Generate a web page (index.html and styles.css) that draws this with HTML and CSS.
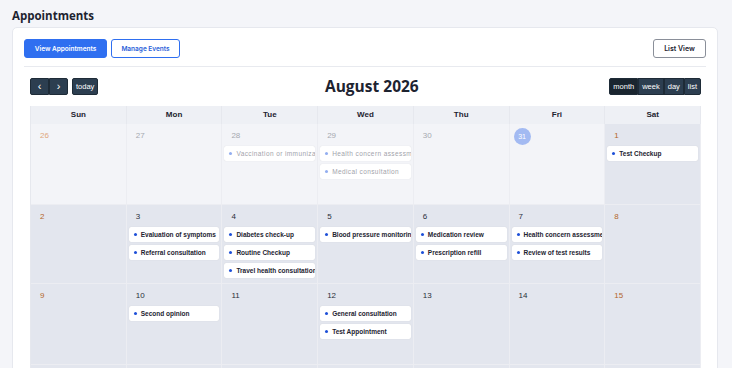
FILE: index.html
```html
<!DOCTYPE html>
<html lang="en">
<head>
    <meta charset="UTF-8">
    <meta name="viewport" content="width=device-width, initial-scale=1.0">
    <title>Appointments</title>
    <link rel="stylesheet" href="styles.css">
</head>
<body>
    <h1 class="page-title">Appointments</h1>
    <section class="card">
        <div class="tab-bar">
            <div class="tabs">
                <button class="tab-button active">View Appointments</button>
                <button class="tab-button">Manage Events</button>
            </div>
            <button class="list-button">List View</button>
        </div>

        <div class="calendar">
            <div class="cal-toolbar">
                <div class="cal-left">
                    <div class="btn-group">
                        <button class="cal-btn arrow">&#8249;</button>
                        <button class="cal-btn arrow">&#8250;</button>
                    </div>
                    <button class="cal-btn">today</button>
                </div>
                <h2 class="cal-title">August 2026</h2>
                <div class="btn-group views">
                    <button class="cal-btn active">month</button>
                    <button class="cal-btn">week</button>
                    <button class="cal-btn">day</button>
                    <button class="cal-btn">list</button>
                </div>
            </div>

            <div class="cal-grid">
                <div class="dow">Sun</div>
                <div class="dow">Mon</div>
                <div class="dow">Tue</div>
                <div class="dow">Wed</div>
                <div class="dow">Thu</div>
                <div class="dow">Fri</div>
                <div class="dow">Sat</div>

                <!-- week 1 -->
                <div class="day other weekend"><span class="num">26</span></div>
                <div class="day other"><span class="num">27</span></div>
                <div class="day other">
                    <span class="num">28</span>
                    <div class="event">Vaccination or immunization</div>
                </div>
                <div class="day other">
                    <span class="num">29</span>
                    <div class="event">Health concern assessment</div>
                    <div class="event">Medical consultation</div>
                </div>
                <div class="day other"><span class="num">30</span></div>
                <div class="day other today"><span class="num">31</span></div>
                <div class="day weekend">
                    <span class="num">1</span>
                    <div class="event">Test Checkup</div>
                </div>

                <!-- week 2 -->
                <div class="day weekend"><span class="num">2</span></div>
                <div class="day">
                    <span class="num">3</span>
                    <div class="event">Evaluation of symptoms</div>
                    <div class="event">Referral consultation</div>
                </div>
                <div class="day">
                    <span class="num">4</span>
                    <div class="event">Diabetes check-up</div>
                    <div class="event">Routine Checkup</div>
                    <div class="event">Travel health consultation</div>
                </div>
                <div class="day">
                    <span class="num">5</span>
                    <div class="event">Blood pressure monitoring</div>
                </div>
                <div class="day">
                    <span class="num">6</span>
                    <div class="event">Medication review</div>
                    <div class="event">Prescription refill</div>
                </div>
                <div class="day">
                    <span class="num">7</span>
                    <div class="event">Health concern assessment</div>
                    <div class="event">Review of test results</div>
                </div>
                <div class="day weekend"><span class="num">8</span></div>

                <!-- week 3 -->
                <div class="day weekend"><span class="num">9</span></div>
                <div class="day">
                    <span class="num">10</span>
                    <div class="event">Second opinion</div>
                </div>
                <div class="day"><span class="num">11</span></div>
                <div class="day">
                    <span class="num">12</span>
                    <div class="event">General consultation</div>
                    <div class="event">Test Appointment</div>
                </div>
                <div class="day"><span class="num">13</span></div>
                <div class="day"><span class="num">14</span></div>
                <div class="day weekend"><span class="num">15</span></div>

                <!-- week 4 (below the fold) -->
                <div class="day"></div>
                <div class="day"></div>
                <div class="day"></div>
                <div class="day"></div>
                <div class="day"></div>
                <div class="day"></div>
                <div class="day"></div>
            </div>
        </div>
    </section>
</body>
</html>
```

FILE: styles.css
```css
body {
    background-color: #f4f5f9;
    margin: 0;
    padding: 0 14px 0 12px;
    font-family: "Liberation Sans", Arial, sans-serif;
    color: #1d2330;
    overflow: hidden;
}
.page-title {
    font-family: "Open Sans", "Liberation Sans", sans-serif;
    font-size: 11.5px;
    font-weight: 700;
    margin: 6px 0 1px;
    line-height: 20px;
}
.card {
    background: white;
    border: 1px solid #e6e8ee;
    border-radius: 5px;
    padding: 11px 11px 0 11px;
    height: 400px;
}
.tab-bar {
    display: flex;
    justify-content: space-between;
    align-items: center;
    padding-bottom: 8px;
    border-bottom: 1px solid #e8eaef;
}
.tabs {
    display: flex;
    gap: 4px;
}
.tab-button, .list-button {
    font-family: "Inter", "Liberation Sans", sans-serif;
    font-size: 6.5px;
    font-weight: 600;
    height: 19px;
    border-radius: 3px;
    cursor: pointer;
}
.tab-button {
    width: 83px;
    padding: 0;
    border: 1px solid #2f6ff0;
    background: white;
    color: #2b5fd9;
}
.tab-button + .tab-button {
    width: 69px;
}
.tab-button.active {
    background: #2f6ff0;
    color: white;
}
.list-button {
    width: 53px;
    padding: 0;
    border: 1px solid #8a8f99;
    background: white;
    color: #1d2330;
    font-size: 7px;
}
.calendar {
    padding: 11px 5px 0 6px;
}
.cal-toolbar {
    display: flex;
    justify-content: space-between;
    align-items: center;
    height: 17px;
    margin-bottom: 11px;
}
.cal-left {
    display: flex;
    gap: 4px;
}
.btn-group {
    display: flex;
}
.cal-btn {
    font-family: "Liberation Sans", Arial, sans-serif;
    font-size: 7.5px;
    height: 17px;
    padding: 0 3px;
    border: 1px solid #1e2b37;
    background: #2c3e50;
    color: white;
    border-radius: 2px;
}
.btn-group .cal-btn {
    border-radius: 0;
}
.btn-group .cal-btn:first-child {
    border-radius: 2px 0 0 2px;
}
.btn-group .cal-btn:last-child {
    border-radius: 0 2px 2px 0;
}
.cal-btn.arrow {
    width: 19px;
    font-size: 11px;
    line-height: 13px;
    padding: 0;
}
.cal-btn.active {
    background: #1a252f;
}
.cal-title {
    font-family: "Open Sans", "Liberation Sans", sans-serif;
    font-size: 15.5px;
    font-weight: 700;
    line-height: 17px;
    margin: 0 0 0 36px;
}
.cal-grid {
    display: grid;
    grid-template-columns: repeat(7, minmax(0, 1fr));
    grid-template-rows: 18px 81px 79px 81px 80px;
    border-left: 1px solid #e6e8ee;
}
.dow {
    background: #eef0f5;
    font-size: 8px;
    font-weight: 700;
    text-align: center;
    line-height: 18px;
    color: #1d2330;
    border-right: 1px solid #e6e8ee;
}
.day {
    background: #e3e6ee;
    border-right: 1px solid #ecedf2;
    border-bottom: 1px solid #ecedf2;
    padding: 0 2px;
    min-width: 0;
}
.day.other {
    background: #f3f4f8;
}
.num {
    display: block;
    font-size: 8px;
    color: #2a2f3a;
    padding: 7px 0 0 7px;
    height: 16px;
    box-sizing: border-box;
    margin-bottom: 6px;
}
.other .num {
    color: #a6a9b0;
}
.weekend .num {
    color: #b4672b;
}
.other.weekend .num {
    color: #e0a77c;
}
.today .num {
    display: inline-block;
    width: 17px;
    height: 17px;
    border-radius: 50%;
    background: #a3baf2;
    color: white;
    font-size: 7px;
    text-align: center;
    line-height: 17px;
    padding: 0;
    margin: 4px 0 1px 2px;
}
.event {
    background: white;
    border-radius: 2px;
    box-shadow: 0 0 1px rgba(0, 0, 0, 0.15);
    height: 15px;
    line-height: 15px;
    font-size: 6.5px;
    font-weight: 700;
    color: #1d2330;
    white-space: nowrap;
    overflow: hidden;
    padding-left: 12px;
    position: relative;
    margin-bottom: 3px;
}
.event::before {
    content: "";
    position: absolute;
    left: 5px;
    top: 6px;
    width: 3px;
    height: 3px;
    border-radius: 50%;
    background: #1d4fd8;
}
.other .event {
    color: #9fa3ab;
    font-weight: 400;
    letter-spacing: 0.4px;
}
.other .event::before {
    background: #93aef0;
}
```
